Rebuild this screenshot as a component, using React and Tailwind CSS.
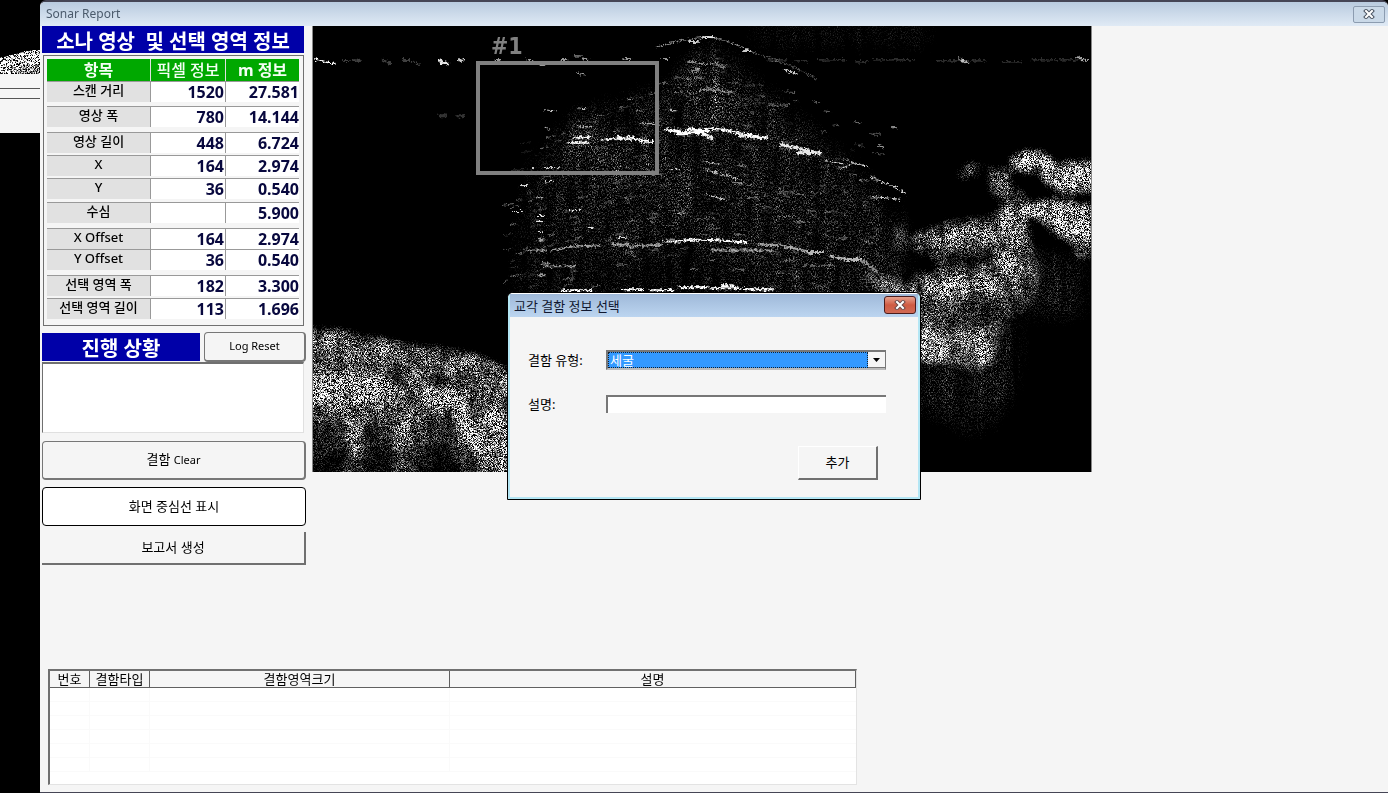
import React from "react";

const ROWS = [
  { label: "스캔 거리", px: "1520", m: "27.581", height: "h-[25px]" },
  { label: "영상 폭", px: "780", m: "14.144", height: "h-[26px]" },
  { label: "영상 길이", px: "448", m: "6.724", height: "h-[23px]" },
  { label: "X", px: "164", m: "2.974", height: "h-[23px]" },
  { label: "Y", px: "36", m: "0.540", height: "h-[24px]" },
  { label: "수심", px: "", m: "5.900", height: "h-[26px]" },
  { label: "X Offset", px: "164", m: "2.974", height: "h-[21px]" },
  { label: "Y Offset", px: "36", m: "0.540", height: "h-[26px]" },
  { label: "선택 영역 폭", px: "182", m: "3.300", height: "h-[23px]" },
  { label: "선택 영역 길이", px: "113", m: "1.696", height: "h-[23px]" },
];

// Bright echo traces: [path, stroke width, opacity]
const TRACES = [
  ["M3 33L12 36L22 38", 2, 1],
  ["M127 35L135 38", 3, 0.9],
  ["M145 34L151 35", 2, 0.8],
  ["M183 35h4 M216 34h4 M228 39h4 M249 34h6 M272 33h3 M312 33h6 M350 33h7", 2, 0.6],
  ["M30 35h6 M40 34l8 1 M70 34l8 4 M90 34h7 M100 36l7 3", 2, 0.25],
  ["M455 34h20 M482 35h14 M506 34h30 M544 36h12 M562 34h40 M625 35h50 M690 36h20 M720 34h50", 1, 0.3],
  ["M648 33l8 4 M766 31l10 4", 2, 0.7],
  ["M345 21Q370 13 395 11Q412 12 440 26", 1, 0.6],
  ["M440 26Q480 38 505 53", 1, 0.35],
  ["M378 16h8 M392 11h10 M432 25h6 M474 44l10 4", 2, 0.8],
  ["M376 36h8 M388 38h6 M400 37h6 M408 41h5 M388 64h20 M412 66h8 M380 45h6", 2, 0.5],
  ["M257 117h20 M262 112l16 -1 M290 114L300 113L320 113L340 116", 2, 0.95],
  ["M305 111l10 2 M316 110l9 4 M328 116h12", 2, 1],
  ["M355 104L368 106 M366 108h10 M376 103L396 105 M372 107h20", 3, 1],
  ["M396 103L412 104L430 108L455 112", 2, 1],
  ["M384 106l16 6 M428 110L452 112", 3, 0.9],
  ["M470 119L485 122L508 128 M486 127h22", 3, 0.9],
  ["M514 135L530 138 M530 143L542 137L557 141", 1, 0.9],
  ["M560 152L575 158L595 168 M562 171L590 174", 1, 0.9],
  ["M395 137l14 2 M393 144l32 9 M393 169l20 5", 1, 0.8],
  ["M216 225h18 M238 225L260 221L287 220", 2, 0.6],
  ["M299 219h16 M318 221L350 219", 2, 0.6],
  ["M352 216h16 M366 216L380 214L410 215L435 217", 2, 1],
  ["M448 219L470 220L495 226 M400 225h60", 2, 0.6],
  ["M497 227h14 M520 231L535 234L548 234", 3, 0.7],
  ["M550 235L565 246", 3, 0.5],
  ["M368 262h28 M398 263h30 M410 260h12 M432 264h30 M310 264h20 M338 265h22 M250 265h30", 2, 1],
  ["M231 84l12 1 M265 82l8 1 M265 101h14 M232 101l5 3 M329 98h15", 1, 0.8],
  ["M228 142h19 M217 143h4 M232 156h8 M208 160h8 M359 144h8 M358 85h6", 1, 0.9],
  ["M202 186h8 M224 190h8 M224 196h8 M226 206h5 M275 202h6 M306 212h8 M256 185h12", 1, 0.9],
  ["M228 238h8 M232 241h30 M226 250h6 M225 172h5 M226 214h6", 2, 0.6],
  ["M127 90h6 M144 90h7", 3, 0.2],
  ["M264 47l8 2 M262 30h8 M380 40l8 4 M403 39h8 M385 52h6 M580 102h5 M567 120l6 2", 1, 0.7],
  ["M466 191h18 M488 196h10 M470 235h14 M492 240h30 M418 244h14 M465 248h14", 1, 0.4],
];

function buildSpecks() {
  let seed = 41;
  const next = () => {
    seed = (seed * 16807) % 2147483647;
    return seed / 2147483647;
  };
  const out = [];
  for (let i = 0; i < 300; i += 1) {
    const x = 190 + next() * 375;
    const fall = Math.abs(x - 400) * 0.45;
    const y = 30 + fall + next() * (235 - fall);
    const w = 3 + next() * 8;
    const slope = ((x - 400) / 200) * 2;
    out.push({ d: `M${x.toFixed(0)} ${y.toFixed(0)}l${w.toFixed(0)} ${slope.toFixed(1)}`, o: (0.1 + next() * 0.4).toFixed(2) });
  }
  return out;
}

const SPECKS = buildSpecks();

function SonarImage() {
  return (
    <svg viewBox="0 0 780 447" className="block h-auto w-full bg-black" role="img" aria-label="소나 영상">
      <defs>
        <filter id="grain" x="0" y="0" width="780" height="447" filterUnits="userSpaceOnUse" colorInterpolationFilters="sRGB">
          <feGaussianBlur in="SourceGraphic" stdDeviation="4" result="soft" />
          <feTurbulence type="fractalNoise" baseFrequency="0.09 0.05" numOctaves="3" seed="9" result="patchRaw" />
          <feColorMatrix in="patchRaw" values="1 0 0 0 0  1 0 0 0 0  1 0 0 0 0  0 0 0 0 1" result="patch" />
          <feComposite in="soft" in2="patch" operator="arithmetic" k1="1.5" k2="0.2" k3="0" k4="0" result="density" />
          <feTurbulence type="fractalNoise" baseFrequency="1.37 1.29" numOctaves="2" seed="4" result="fineRaw" />
          <feColorMatrix in="fineRaw" values="1 0 0 0 0  1 0 0 0 0  1 0 0 0 0  0 0 0 0 1" result="fine" />
          <feComposite in="density" in2="fine" operator="arithmetic" k1="6.8" k2="-2.55" k3="0" k4="-0.12" />
        </filter>
        <filter id="streak" x="0" y="0" width="780" height="447" filterUnits="userSpaceOnUse" colorInterpolationFilters="sRGB">
          <feGaussianBlur in="SourceGraphic" stdDeviation="10" result="soft" />
          <feTurbulence type="fractalNoise" baseFrequency="0.1 0.015" numOctaves="3" seed="21" result="colRaw" />
          <feColorMatrix in="colRaw" values="1.2 0 0 0 -0.1  1.2 0 0 0 -0.1  1.2 0 0 0 -0.1  0 0 0 0 1" result="col" />
          <feComposite in="soft" in2="col" operator="arithmetic" k1="1.7" k2="0" k3="0" k4="0" result="density" />
          <feTurbulence type="fractalNoise" baseFrequency="1.31 0.67" numOctaves="2" seed="7" result="fineRaw" />
          <feColorMatrix in="fineRaw" values="1 0 0 0 0  1 0 0 0 0  1 0 0 0 0  0 0 0 0 1" result="fine" />
          <feComposite in="density" in2="fine" operator="arithmetic" k1="6" k2="-2.75" k3="0" k4="-0.03" />
        </filter>
        <filter id="rough" x="0" y="0" width="780" height="447" filterUnits="userSpaceOnUse" colorInterpolationFilters="sRGB">
          <feTurbulence type="fractalNoise" baseFrequency="0.4" numOctaves="2" seed="3" result="n" />
          <feDisplacementMap in="SourceGraphic" in2="n" scale="6" xChannelSelector="R" yChannelSelector="G" />
        </filter>
      </defs>

      <g filter="url(#streak)">
        <rect width="780" height="447" fill="#000" />
        <path d="M395 12L360 60L260 90L210 150L200 290L600 290L595 200L540 140L450 60Z" fill="#fff" fillOpacity="0.23" />
        <path d="M390 26L372 60L372 100L425 108L416 40Z" fill="#fff" fillOpacity="0.2" />
        <path d="M250 115L345 112V160L260 165Z" fill="#fff" fillOpacity="0.13" />
        <path d="M440 0H620V20H440Z" fill="#fff" fillOpacity="0.16" />
        <path d="M230 236H450V290H230Z M190 120H250V290H190Z" fill="#000" fillOpacity="0.4" />
        <path d="M600 300H710L700 370L670 410L600 380Z" fill="#fff" fillOpacity="0.22" />
        <path d="M710 230H770V290H700Z" fill="#fff" fillOpacity="0.22" />
      </g>

      <g filter="url(#grain)" className="mix-blend-screen">
        <rect width="780" height="447" fill="#000" />
        <path d="M-10 305L37 306L55 312L80 316L105 320L130 323L165 329L200 348L260 364V460H-10Z" fill="#fff" fillOpacity="0.48" />
        <path d="M-10 304L37 306L38 320L-10 320Z M60 312L78 316L74 328L58 324Z M140 328L195 345V362L150 344Z" fill="#fff" fillOpacity="0.5" />
        <path d="M-10 351L65 352L82 362L78 378L38 374L-10 382Z" fill="#fff" fillOpacity="0.95" />
        <path d="M104 362L130 362L150 378L164 400L178 432L160 430L140 386L112 376Z" fill="#fff" fillOpacity="0.95" />
        <path d="M165 385L185 385L200 395V447H184L172 410Z M86 395L96 395L92 450H82Z M36 370H44L50 430H40Z" fill="#fff" fillOpacity="0.5" />
        <path d="M-10 398H28L34 460H-10Z M50 400L80 398V460H50Z M118 395L138 392L155 460H98Z" fill="#000" fillOpacity="0.5" />
        <path d="M-10 425H165V460H-10Z" fill="#000" fillOpacity="0.35" />
        <path d="M110 354L135 350L140 360L112 362Z" fill="#000" fillOpacity="0.7" />

        <path d="M602 208L640 195L685 190L692 178L712 168L720 215L730 240L725 262L720 285L700 292L682 330L670 348L640 342L600 332V250L630 240L600 225Z" fill="#fff" fillOpacity="0.4" />
        <path d="M645 148L655 138L672 138L668 150L650 154Z" fill="#fff" fillOpacity="0.4" />
        <path d="M676 142L698 145L700 160L716 170L700 174L680 170Z" fill="#fff" fillOpacity="0.5" />
        <path d="M699 134L712 127L730 126L742 138L785 136V164L755 167L738 160L728 146L702 144Z" fill="#fff" fillOpacity="0.95" />
        <path d="M709 182L735 174L785 182V218L760 216L742 206L728 190L712 190Z" fill="#fff" />
        <path d="M764 216L780 218L778 234L766 232Z" fill="#fff" fillOpacity="0.5" />
        <path d="M688 182L706 180L718 212L710 222L692 214Z" fill="#fff" fillOpacity="0.55" />
        <path d="M612 211L640 204L680 200L688 210L650 220L616 221Z" fill="#fff" fillOpacity="0.55" />
        <path d="M584 199h10v28h-10Z" fill="#fff" fillOpacity="0.4" />
        <path d="M684 226L712 224L708 246L692 250Z M614 258L640 252L686 250L690 264L655 270L614 272Z" fill="#fff" fillOpacity="0.8" />
        <path d="M600 306L636 307L640 330L618 338L600 334Z M648 308L674 308L680 340L668 340Z" fill="#fff" fillOpacity="0.75" />
        <path d="M550 244L566 248L604 262V275H574Z" fill="#fff" fillOpacity="0.5" />
        <path d="M706 150L726 150L728 166L708 168Z M602 228L630 230L626 246L604 248Z M640 228L678 226L676 240L642 242Z" fill="#000" fillOpacity="0.65" />
        <path d="M640 280L745 275L745 300L645 302Z" fill="#000" fillOpacity="0.35" />
      </g>

      <g filter="url(#rough)" fill="none" stroke="#fff" strokeLinecap="round" className="mix-blend-screen">
        {SPECKS.map((s, i) => (
          <path key={i} d={s.d} strokeOpacity={s.o} strokeWidth="1" />
        ))}
        {TRACES.map(([d, w, o]) => (
          <path key={d} d={d} strokeWidth={w} strokeOpacity={o} />
        ))}
      </g>
    </svg>
  );
}

function BackgroundStrip() {
  return (
    <div className="flex w-10 shrink-0 flex-col bg-black" aria-hidden="true">
      <svg viewBox="0 0 40 74" className="block w-full">
        <defs>
          <filter id="sideGrain" x="0" y="0" width="40" height="74" filterUnits="userSpaceOnUse" colorInterpolationFilters="sRGB">
            <feTurbulence type="fractalNoise" baseFrequency="1.37 1.29" numOctaves="2" seed="2" result="raw" />
            <feColorMatrix in="raw" values="1 0 0 0 0  1 0 0 0 0  1 0 0 0 0  0 0 0 0 1" result="fine" />
            <feComposite in="SourceGraphic" in2="fine" operator="arithmetic" k1="8" k2="-3.1" k3="0" k4="0" />
          </filter>
        </defs>
        <g filter="url(#sideGrain)">
          <rect width="40" height="74" fill="#000" />
          <path d="M0 58L16 54L26 51L40 50V74H0Z" fill="#fff" />
          <path d="M14 74L24 67L40 63V74Z" fill="#777" />
        </g>
      </svg>
      <div className="h-[14px] bg-[#f5f5f5]" />
      <div className="h-[11px] border-y border-[#555] bg-[#f5f5f5]" />
      <div className="h-[34px] bg-[#f5f5f5]" />
    </div>
  );
}

function CloseGlyph({ outline }) {
  return (
    <svg viewBox="0 0 12 10" className="h-[10px] w-3">
      <path d="M3 2L9 8M9 2L3 8" stroke={outline} strokeWidth="4" strokeLinecap="square" />
      <path d="M3 2L9 8M9 2L3 8" stroke="#fff" strokeWidth="2" strokeLinecap="square" />
    </svg>
  );
}

function InfoTable() {
  return (
    <div className="mr-[2px] ml-px mt-[2px] border border-[#707070] pt-[3px] pr-1 pb-1 pl-[3px]">
      <table className="w-full table-fixed border-separate border-spacing-0">
        <colgroup>
          <col className="w-[103px]" />
          <col className="w-[75px]" />
          <col />
        </colgroup>
        <thead>
          <tr className="h-[22px] bg-[#00a800] text-[16px] leading-[22px] text-[#f4fff4]">
            <th scope="col" className="p-0 font-bold">항목</th>
            <th scope="col" className="border-l border-[#e0e0e0] p-0 font-medium">픽셀 정보</th>
            <th scope="col" className="border-l border-[#e0e0e0] p-0 font-bold">m 정보</th>
          </tr>
        </thead>
        <tbody>
          {ROWS.map((row) => (
            <tr key={row.label} className={row.height}>
              <th scope="row" className="p-0 align-top font-medium">
                <div className="h-[21px] border-t border-[#999] bg-[#e1e1e1] text-[13px] leading-4">{row.label}</div>
              </th>
              <td className="p-0 align-top">
                <div className="h-[21px] border-t border-l border-[#999] bg-white pr-px text-right text-[16px] leading-5 font-bold text-[#08083e]">{row.px}</div>
              </td>
              <td className="p-0 align-top">
                <div className="h-[21px] border-t border-l border-[#999] bg-white text-right text-[16px] leading-5 font-bold text-[#08083e]">{row.m}</div>
              </td>
            </tr>
          ))}
        </tbody>
      </table>
    </div>
  );
}

function DefectDialog() {
  return (
    <div role="dialog" aria-labelledby="dialog-title" className="w-[414px] rounded-t-[6px] border border-black bg-[#f5f5f5]">
      <div className="rounded-t-[5px] border-x-2 border-b-2 border-t border-[#b4e6f4] border-t-white">
        <div className="flex h-[23px] items-start justify-between bg-linear-to-b from-[#9fb9d9] to-[#bcd5f0] pl-1">
          <h2 id="dialog-title" className="text-[13px] leading-6 text-[#101830]">교각 결함 정보 선택</h2>
          <button type="button" aria-label="닫기" className="mt-[2px] mr-[2px] flex h-[18px] w-8 items-center justify-center rounded-[3px] border border-[#4a1c1c] bg-linear-to-b from-[#e6a18f] via-[#cf5a42] to-[#d06a55]">
            <CloseGlyph outline="#6b4a4a" />
          </button>
        </div>
        <form className="flex flex-col pt-[33px] pr-8 pb-[17px] pl-[18px]" onSubmit={(e) => e.preventDefault()}>
          <div className="flex items-center">
            <label htmlFor="defect-type" className="w-[78px] text-[13px] leading-5">결함 유형:</label>
            <div className="flex h-5 flex-1 border-2 border-r border-[#777] border-b-[#bbb] bg-white">
              <select id="defect-type" className="block h-4 min-w-0 flex-1 appearance-none border border-dotted border-[#123] bg-[#3399ff] pl-[1px] text-[13px] leading-[14px] text-white outline-none">
                <option>세굴</option>
              </select>
              <span className="pointer-events-none flex h-4 w-[17px] items-center justify-center border-b border-[#777] bg-[#f5f5f5]">
                <svg viewBox="0 0 7 4" className="h-1 w-[7px]"><path d="M0 0h7L3.5 4Z" fill="#000" /></svg>
              </span>
            </div>
          </div>
          <div className="mt-6 flex items-center">
            <label htmlFor="defect-note" className="w-[78px] text-[13px] leading-5">설명:</label>
            <input id="defect-note" type="text" className="h-[18px] min-w-0 flex-1 border-t-2 border-l-2 border-[#777] bg-white px-1 text-[13px] outline-none" />
          </div>
          <button type="submit" className="mt-8 mr-[8px] h-[34px] w-20 self-end border border-r-2 border-b-2 border-white border-r-[#707070] border-b-[#707070] bg-[#f5f5f5] text-[13px]">추가</button>
        </form>
      </div>
    </div>
  );
}

function DefectTable() {
  return (
    <div className="mt-auto mb-[7px] ml-[8px] h-[116px] w-[809px] max-w-full border-t-2 border-l-2 border-r border-b border-[#707070] border-r-[#e3e3e3] border-b-[#e3e3e3] bg-white">
      <table className="w-full table-fixed border-separate border-spacing-0 text-[13px]">
        <colgroup>
          <col className="w-10" />
          <col className="w-[60px]" />
          <col className="w-[300px]" />
          <col />
        </colgroup>
        <thead>
          <tr className="bg-[#f5f5f5] leading-4">
            <th scope="col" className="border-r border-b border-[#606060] p-0 font-normal">번호</th>
            <th scope="col" className="border-r border-b border-[#606060] p-0 font-normal">결함타입</th>
            <th scope="col" className="border-r border-b border-[#606060] p-0 font-normal">결함영역크기</th>
            <th scope="col" className="border-r border-b border-[#606060] p-0 font-normal">설명</th>
          </tr>
        </thead>
        <tbody>
          {[0, 1, 2, 3, 4, 5].map((n) => (
            <tr key={n} className="h-[14px]">
              <td className="border-r border-b border-[#fafafa] p-0" />
              <td className="border-r border-b border-[#fafafa] p-0" />
              <td className="border-r border-b border-[#fafafa] p-0" />
              <td className="border-b border-[#fafafa] p-0" />
            </tr>
          ))}
        </tbody>
      </table>
    </div>
  );
}

export default function App() {
  return (
    <div className="flex min-h-screen bg-black font-['Noto_Sans','Noto_Sans_CJK_KR',sans-serif] text-black">
      <BackgroundStrip />
      <div className="relative flex min-w-0 flex-1 flex-col rounded-t-[6px] border-t-2 border-b border-[#454555] bg-[#f5f5f5]">
        <header className="flex h-6 items-center justify-between rounded-t-[5px] bg-linear-to-b from-[#b9cbdf] to-[#e0eaf5] pr-[3px] pl-[6px]">
          <h1 className="text-[12px] leading-6 text-[#4b5b6c]">Sonar Report</h1>
          <button type="button" aria-label="창 닫기" className="flex h-[17px] w-8 items-center justify-center rounded-[2px] border border-[#8c9cb0] bg-[#cad9e8]">
            <CloseGlyph outline="#4c5664" />
          </button>
        </header>

        <main className="flex flex-1 flex-col">
          <div className="flex items-start gap-[6px] pl-[2px]">
            <aside className="flex w-[264px] shrink-0 flex-col">
              <h2 className="mr-[2px] h-[27px] bg-[#0000a8] text-center text-[20px] leading-[31px] font-bold whitespace-pre text-white">소나 영상  및 선택 영역 정보</h2>
              <InfoTable />
              <div className="mt-[6px] flex items-start justify-between">
                <h2 className="mt-px h-7 w-[158px] bg-[#0000a8] text-center text-[20px] leading-[31px] font-bold text-white">진행 상황</h2>
                <button type="button" className="h-[30px] w-[102px] rounded-[4px] border border-r-2 border-b-2 border-[#777] bg-[#f5f5f5] text-[11px]">Log Reset</button>
              </div>
              <textarea aria-label="진행 상황" readOnly className="mr-[2px] block h-[71px] resize-none border border-t-2 border-[#707070] border-r-[#e0e0e0] border-b-[#e0e0e0] bg-white outline-none" />
              <button type="button" className="mt-2 h-[39px] rounded-[4px] border border-r-2 border-b-2 border-[#777] bg-[#f5f5f5] text-[13px]">
                결함 <span className="text-[11px]">Clear</span>
              </button>
              <button type="button" className="mt-[7px] h-[39px] rounded-[4px] border border-black bg-white text-[13px]">화면 중심선 표시</button>
              <button type="button" className="mt-[6px] h-[33px] border-r-2 border-b-2 border-[#707070] bg-[#f5f5f5] text-[13px]">보고서 생성</button>
            </aside>

            <div className="relative w-[780px] max-w-full border-x border-[#888]">
              <SonarImage />
              <div className="absolute top-[35px] left-[163px] h-[114px] w-[183px] border-4 border-[#808080]" />
              <span className="absolute top-[8px] left-[178px] font-['DejaVu_Sans_Condensed','DejaVu_Sans',sans-serif] text-[23px] leading-6 font-bold text-[#808080]">#1</span>
            </div>
          </div>
          <DefectTable />
        </main>

        <div className="pointer-events-none absolute inset-0 flex items-center justify-center pb-[2px]">
          <div className="pointer-events-auto">
            <DefectDialog />
          </div>
        </div>
      </div>
    </div>
  );
}
